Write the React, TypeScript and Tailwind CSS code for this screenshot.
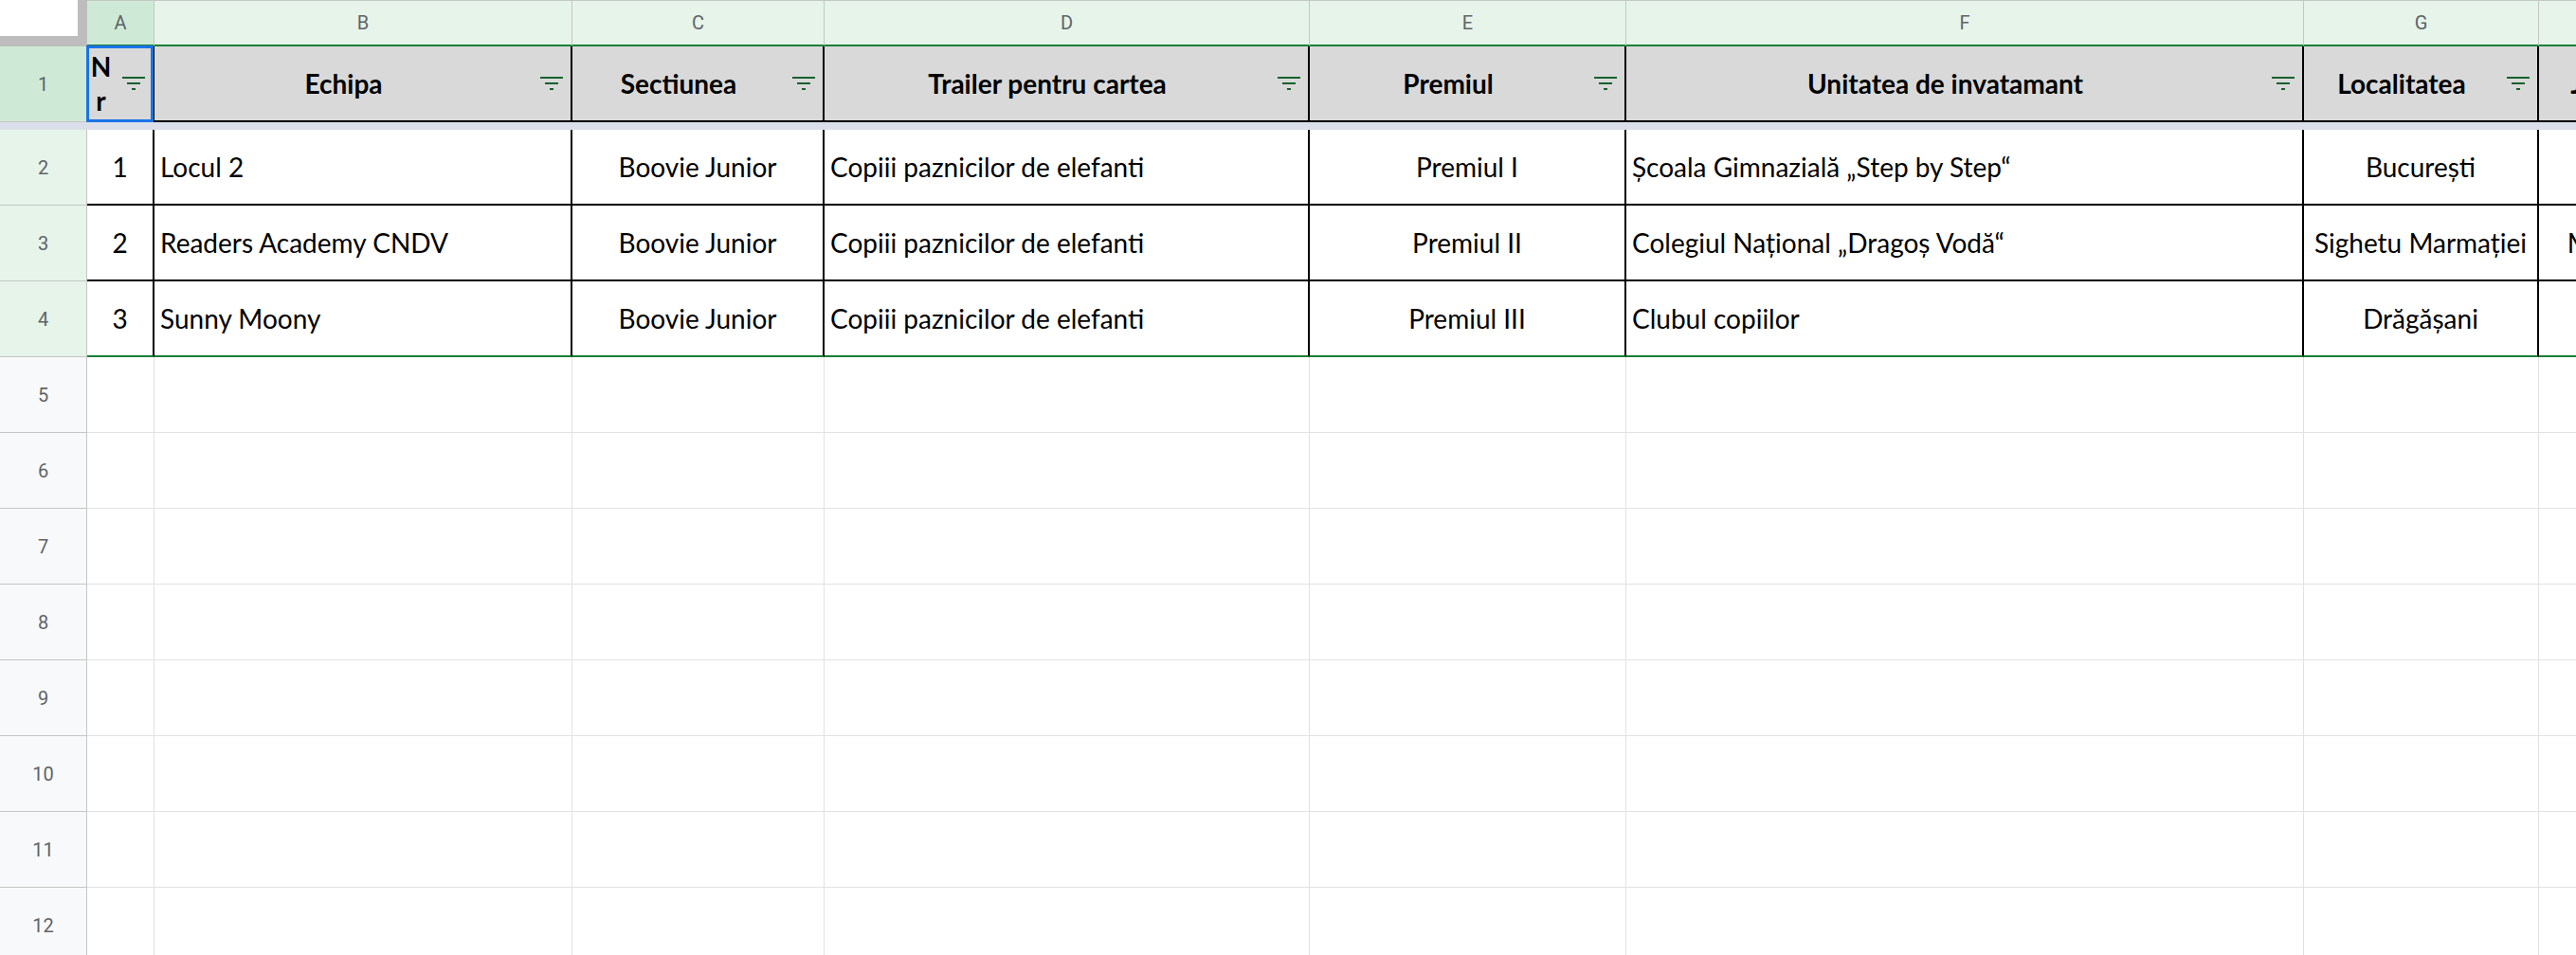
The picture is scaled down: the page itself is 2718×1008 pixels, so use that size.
const COL_W = [
  'w-[71px]',
  'w-[441px]',
  'w-[266px]',
  'w-[512px]',
  'w-[334px]',
  'w-[715px]',
  'w-[248px]',
  'w-[200px]',
];

const LETTERS = ['A', 'B', 'C', 'D', 'E', 'F', 'G', 'H'];

const HEADERS = [
  'Nr',
  'Echipa',
  'Sectiunea',
  'Trailer pentru cartea',
  'Premiul',
  'Unitatea de invatamant',
  'Localitatea',
  'Județul',
];

// text alignment per column
const ALIGN = [
  'justify-center',
  'justify-start pl-[6px]',
  'justify-center',
  'justify-start pl-[6px]',
  'justify-center',
  'justify-start pl-[6px]',
  'justify-center',
  'justify-center',
];

const ROWS = [
  ['1', 'Locul 2', 'Boovie Junior', 'Copiii paznicilor de elefanti', 'Premiul I', 'Școala Gimnazială „Step by Step“', 'București', ''],
  ['2', 'Readers Academy CNDV', 'Boovie Junior', 'Copiii paznicilor de elefanti', 'Premiul II', 'Colegiul Național „Dragoș Vodă“', 'Sighetu Marmației', 'Maramureș'],
  ['3', 'Sunny Moony', 'Boovie Junior', 'Copiii paznicilor de elefanti', 'Premiul III', 'Clubul copiilor', 'Drăgășani', ''],
];

const EMPTY_ROWS = [5, 6, 7, 8, 9, 10, 11, 12];

function FilterIcon() {
  return (
    <svg width="24" height="14" viewBox="0 0 24 14" className="shrink-0">
      <rect x="0" y="0" width="24" height="2" fill="#17612c" />
      <rect x="5" y="6" width="14" height="2" fill="#17612c" />
      <rect x="10" y="12" width="4" height="2" fill="#17612c" />
    </svg>
  );
}

function RowHeader({ n, tone }: { n: number; tone: 'sel' | 'range' | 'plain' }) {
  const bg =
    tone === 'sel' ? 'bg-[#ceead6]' : tone === 'range' ? 'bg-[#e6f4ea]' : 'bg-[#f8f9fa]';
  return (
    <div
      className={`flex h-full w-[92px] shrink-0 items-center justify-center border-r border-b border-[#c4c7c5] ${bg} font-['Roboto',sans-serif] text-[20px] text-[#5f6368]`}
    >
      {n}
    </div>
  );
}

export default function App() {
  return (
    <div className="h-[1008px] w-[2718px] overflow-hidden bg-white font-['Lato',sans-serif] text-black">
      {/* column letters */}
      <div className="flex h-[49px]">
        <div className="flex h-full w-[92px] shrink-0 flex-col bg-[#bdbdbd]">
          <div className="h-[38px] w-[82px] bg-white" />
        </div>
        {LETTERS.map((l, i) => (
          <div
            key={l}
            className={`${COL_W[i]} flex h-full shrink-0 items-center justify-center border-t border-r border-[#c4c7c5] border-b-2 border-b-[#188038] ${
              i === 0 ? 'bg-[#ceead6]' : 'bg-[#e6f4ea]'
            } font-['Roboto',sans-serif] text-[20px] text-[#5f6368]`}
          >
            {l}
          </div>
        ))}
      </div>

      {/* header row 1 */}
      <div className="flex h-[80px]">
        <RowHeader n={1} tone="sel" />
        {HEADERS.map((h, i) => (
          <div
            key={h}
            className={`${COL_W[i]} relative flex h-full shrink-0 items-center border-r-2 border-b-2 border-black bg-[#d9d9d9]`}
          >
            <div className="flex min-w-0 flex-1 justify-center whitespace-nowrap text-center text-[28px] font-bold">
              {i === 0 ? (
                <div className="flex flex-col items-center leading-[36px]">
                  <span>N</span>
                  <span>r</span>
                </div>
              ) : (
                h
              )}
            </div>
            <div className="flex w-[40px] shrink-0 justify-end pr-[8px]">
              <FilterIcon />
            </div>
            {i === 0 && (
              <div className="absolute -top-[1px] -left-[1px] h-[81px] w-[71px] border-[3px] border-[#1a73e8]" />
            )}
          </div>
        ))}
      </div>

      {/* frozen row divider */}
      <div className="h-[8px] bg-[#dadfe9]" />

      {/* data rows */}
      {ROWS.map((row, r) => (
        <div key={r} className="flex h-[80px]">
          <RowHeader n={r + 2} tone="range" />
          {row.map((v, i) => (
            <div
              key={i}
              className={`${COL_W[i]} flex h-full shrink-0 items-center overflow-hidden whitespace-nowrap border-r-2 border-b-2 border-r-black ${
                r === ROWS.length - 1 ? 'border-b-[#188038]' : 'border-b-black'
              } ${ALIGN[i]} text-[28px]`}
            >
              {v}
            </div>
          ))}
        </div>
      ))}

      {/* empty rows */}
      {EMPTY_ROWS.map((n) => (
        <div key={n} className="flex h-[80px]">
          <RowHeader n={n} tone="plain" />
          {COL_W.map((w, i) => (
            <div key={i} className={`${w} h-full shrink-0 border-r border-b border-[#e2e2e3]`} />
          ))}
        </div>
      ))}
    </div>
  );
}
